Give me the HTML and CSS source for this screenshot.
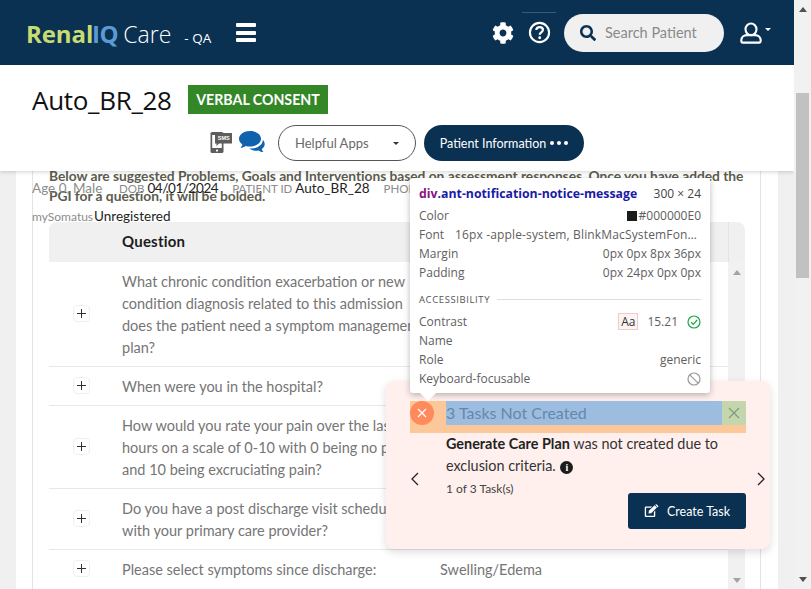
FILE: index.html
```html
<!DOCTYPE html>
<html lang="en">
<head>
<meta charset="utf-8">
<title>Auto_BR_28</title>
<link rel="stylesheet" href="styles.css">
</head>
<body>
<div class="viewport">
  <header class="topbar">
    <div class="brand"><span class="logo-renal">Renal</span><span class="logo-iq">IQ</span><span class="logo-care">Care</span><span class="logo-env">- QA</span></div>
    <div class="burger"><i></i><i></i><i></i></div>
    <div class="top-actions">
      <svg class="gear" viewBox="0 0 512 512"><path fill="#fff" d="M487.4 315.7l-42.6-24.6c4.3-23.2 4.3-47 0-70.2l42.6-24.6c4.9-2.8 7.1-8.6 5.5-14-11.1-35.6-30-67.8-54.7-94.6-3.8-4.1-10-5.1-14.8-2.3L380.8 110c-17.9-15.4-38.5-27.3-60.8-35.1V25.8c0-5.6-3.9-10.5-9.4-11.7-36.7-8.2-74.3-7.8-109.2 0-5.5 1.2-9.4 6.1-9.4 11.7V75c-22.2 7.9-42.8 19.8-60.8 35.1L88.7 85.5c-4.9-2.8-11-1.9-14.8 2.3-24.7 26.7-43.6 58.9-54.7 94.6-1.7 5.4.6 11.2 5.5 14L67.3 221c-4.3 23.2-4.3 47 0 70.2l-42.6 24.6c-4.9 2.8-7.1 8.6-5.5 14 11.1 35.6 30 67.8 54.7 94.6 3.8 4.1 10 5.1 14.8 2.3l42.6-24.6c17.9 15.4 38.5 27.3 60.8 35.1v49.2c0 5.6 3.9 10.5 9.4 11.7 36.7 8.2 74.3 7.8 109.2 0 5.5-1.2 9.4-6.1 9.4-11.7v-49.2c22.2-7.9 42.8-19.8 60.8-35.1l42.6 24.6c4.9 2.8 11 1.9 14.8-2.3 24.7-26.7 43.6-58.9 54.7-94.6 1.5-5.5-.7-11.3-5.6-14.1zM256 336c-44.1 0-80-35.9-80-80s35.9-80 80-80 80 35.9 80 80-35.9 80-80 80z"/></svg>
      <div class="help-wrap">
        <svg class="help" viewBox="0 0 24 24"><circle cx="12" cy="12" r="10" fill="none" stroke="#fff" stroke-width="2.2"/><path d="M8.600 9.400c.2-2 1.600-3.100 3.500-3.100 2 0 3.500 1.200 3.500 2.900 0 2.600-3.400 2.600-3.400 5.100" fill="none" stroke="#fff" stroke-width="2.300"/><circle cx="12.200" cy="17.500" r="1.500" fill="#fff"/></svg>
      </div>
      <div class="search">
        <svg class="search-icon" viewBox="0 0 512 512"><path fill="#0a3152" d="M505 442.7L405.3 343c-4.5-4.5-10.6-7-17-7H372c27.6-35.3 44-79.7 44-128C416 93.1 322.9 0 208 0S0 93.1 0 208s93.1 208 208 208c48.3 0 92.7-16.4 128-44v16.3c0 6.4 2.5 12.5 7 17l99.7 99.7c9.4 9.4 24.6 9.4 33.9 0l28.3-28.3c9.4-9.4 9.4-24.6.1-34zM208 336c-70.7 0-128-57.2-128-128 0-70.7 57.2-128 128-128 70.7 0 128 57.2 128 128 0 70.7-57.2 128-128 128z"/></svg>
        <span>Search Patient</span>
      </div>
      <div class="user">
        <svg class="user-icon" viewBox="0 0 24 24"><ellipse cx="12" cy="8" rx="6" ry="6.300" fill="none" stroke="#fff" stroke-width="2.300"/><path d="M3 22.500c-1.200 0-1.600-.8-1.600-2.200 0-3.600 2.800-6 6.200-6h8.800c3.400 0 6.200 2.400 6.200 6 0 1.400-.4 2.200-1.600 2.200z" fill="none" stroke="#fff" stroke-width="2.300" stroke-linejoin="round"/></svg>
        <span class="user-caret"></span>
      </div>
    </div>
  </header>

  <section class="subbar">
    <div class="subbar-title">
      <h1>Auto_BR_28</h1>
      <span class="badge">VERBAL CONSENT</span>
    </div>
    <div class="subbar-actions">
      <svg class="sms" viewBox="0 0 22 22"><rect x="0.5" y="1" width="13" height="21" rx="1.600" fill="#5d5d5d"/><rect x="2.200" y="4" width="9.600" height="13" fill="#fff"/><circle cx="7" cy="19.600" r="1.100" fill="#fff"/><path d="M5 2h17v10.500h-13l-2.500 2.500v-2.500h-1.500z" fill="#5d5d5d"/><text x="13.700" y="9.300" class="sms-text">SMS</text></svg>
      <svg class="chat" viewBox="0 0 28 22"><path d="M11 0C5 0 0 3.400 0 7.800c0 2.300 1.300 4.300 3.400 5.700-.3 1.300-1.100 2.500-2.100 3.300 2.100 0 4-.8 5.400-1.900 1.400.4 2.800.6 4.300.6 6 0 11-3.400 11-7.700S17 0 11 0z" fill="#0f62ad"/><path d="M23.800 8.800c.2 4.900-5 8.500-10.900 8.700-.9 0-1.800 0-2.700-.2 1.700 1.700 4.100 2.600 6.600 2.500 1 0 2-.2 2.900-.4 1.300 1 2.900 1.700 4.800 1.700-.9-.8-1.500-1.800-1.700-3 1.900-1.300 2.900-3 2.900-4.800 0-1.800-.8-3.300-1.900-4.500z" fill="#0f62ad"/></svg>
      <div class="pill pill-outline"><span>Helpful Apps</span><span class="caret"></span></div>
      <div class="pill pill-solid"><span>Patient Information</span><span class="dots"><i></i><i></i><i></i></span></div>
    </div>
  </section>

  <main class="gutter">
    <div class="card">
      <div class="panel">
        <p class="intro">Below are suggested Problems, Goals and Interventions based on assessment responses. Once you have added the<br>PGI for a question, it will be bolded.</p>
        <div class="patient-row row-one">
          <span class="lab age">Age 0, Male</span><span class="lab dob">DOB</span><span class="val date">04/01/2024</span><span class="lab pid">PATIENT ID</span><span class="val">Auto_BR_28</span><span class="lab phone">PHONE</span>
        </div>
        <div class="patient-row row-two"><span class="lab small">mySomatus</span><span class="val">Unregistered</span></div>

        <div class="table">
          <div class="thead">
            <div class="th-expand"></div>
            <div class="th-q">Question</div>
            <div class="th-bar"></div>
          </div>
          <div class="tbody">
            <div class="rows">
              <div class="tr"><div class="expand"><span class="plus"></span></div><div class="q">What chronic condition exacerbation or new<br>condition diagnosis related to this admission<br>does the patient need a symptom management<br>plan?</div></div>
              <div class="tr"><div class="expand"><span class="plus"></span></div><div class="q">When were you in the hospital?</div></div>
              <div class="tr"><div class="expand"><span class="plus"></span></div><div class="q">How would you rate your pain over the last 24<br>hours on a scale of 0-10 with 0 being no pain<br>and 10 being excruciating pain?</div></div>
              <div class="tr"><div class="expand"><span class="plus"></span></div><div class="q">Do you have a post discharge visit scheduled<br>with your primary care provider?</div></div>
              <div class="tr"><div class="expand"><span class="plus"></span></div><div class="q">Please select symptoms since discharge:</div><div class="a">Swelling/Edema</div></div>
            </div>
            <div class="inner-scroll"><span class="arrow-up"></span><span class="arrow-down"></span></div>
          </div>
        </div>
      </div>
    </div>
  </main>
</div>

<div class="page-scroll">
  <span class="arrow-up dark"></span>
  <div class="thumb"></div>
  <span class="arrow-down dark"></span>
</div>

<aside class="notice">
  <div class="notice-head">
    <div class="notice-msg">
      <span class="err"><svg viewBox="0 0 10 10"><path d="M1 1l8 8M9 1l-8 8" stroke="#fff" stroke-width="1.200"/></svg></span>
      <span class="notice-title">3 Tasks Not Created</span>
      <span class="notice-close"><svg viewBox="0 0 12 12"><path d="M1 1l10 10M11 1L1 11" stroke="#7d9a78" stroke-width="1.100"/></svg></span>
    </div>
  </div>
  <div class="notice-body">
    <svg class="chev" viewBox="0 0 10 14"><path d="M8 1L2 7l6 6" fill="none" stroke="#222" stroke-width="1.300"/></svg>
    <div class="notice-main">
      <p class="notice-text"><b>Generate Care Plan</b> was not created due to exclusion criteria. <span class="info">i</span></p>
      <div class="notice-count">1 of 3 Task(s)</div>
      <div class="notice-actions">
        <div class="task-btn">
          <svg viewBox="0 0 20 18"><path d="M1 4.500a1.500 1.500 0 0 1 1.500-1.500h8.500l-1.800 1.800H2.800v10.400h10.400v-5l1.800-1.800v7.100a1.500 1.500 0 0 1-1.500 1.500h-11A1.500 1.500 0 0 1 1 15.500z" fill="#fff"/><path d="M6.500 8.800l7.600-7.600 3.100 3.100-7.600 7.600-3.600.5zM15 .4l.7-.4c.4-.2.9-.1 1.200.2l1.900 1.900c.3.300.4.800.2 1.200l-.9 1z" fill="#fff"/></svg>
          <span>Create Task</span>
        </div>
      </div>
    </div>
    <svg class="chev" viewBox="0 0 10 14"><path d="M2 1l6 6-6 6" fill="none" stroke="#222" stroke-width="1.300"/></svg>
  </div>
</aside>

<aside class="inspector">
  <div class="ins-head"><span class="ins-sel"><span class="ins-tag">div</span>.ant-notification-notice-message</span><span>300 × 24</span></div>
  <div class="ins-row"><span>Color</span><span class="ins-color"><i class="swatch"></i>#000000E0</span></div>
  <div class="ins-row"><span>Font</span><span class="ins-font">16px -apple-system, BlinkMacSystemFon…</span></div>
  <div class="ins-row"><span>Margin</span><span>0px 0px 8px 36px</span></div>
  <div class="ins-row"><span>Padding</span><span>0px 24px 0px 0px</span></div>
  <div class="ins-section"><span>ACCESSIBILITY</span><i></i></div>
  <div class="ins-row"><span>Contrast</span><span class="ins-contrast"><span class="aa">Aa</span><span>15.21</span><svg viewBox="0 0 14 14"><circle cx="7" cy="7" r="6" fill="none" stroke="#1ea446" stroke-width="1.200"/><path d="M4 7.200l2.200 2.200L10.200 5" fill="none" stroke="#1ea446" stroke-width="1.200"/></svg></span></div>
  <div class="ins-row"><span>Name</span></div>
  <div class="ins-row"><span>Role</span><span>generic</span></div>
  <div class="ins-row"><span>Keyboard-focusable</span><svg class="ins-no" viewBox="0 0 14 14"><circle cx="7" cy="7" r="6" fill="none" stroke="#999" stroke-width="1.200"/><path d="M2.800 2.800l8.400 8.400" stroke="#999" stroke-width="1.200"/></svg></div>
</aside>
</body>
</html>
```

FILE: styles.css
```css
* { box-sizing: border-box; }
html, body { margin: 0; height: 589px; overflow: hidden; }
body { display: flex; position: relative; font-family: Lato, "Noto Sans", sans-serif; color: #222; background: #f0f0f0; }
p, h1 { margin: 0; }

.viewport { flex: 1; min-width: 0; height: 589px; overflow: hidden; display: flex; flex-direction: column; }

.topbar { height: 65px; flex: none; background: #0a3152; display: flex; align-items: center; padding: 0 26px; color: #fff; }
.brand { display: flex; align-items: baseline; font-family: "Open Sans", sans-serif; width: 210px; padding-top: 1px; }
.logo-renal { width: 66px; font-size: 24px; font-weight: 700; color: #c8dc72; letter-spacing: -.1px; }
.logo-iq { font-size: 24px; font-weight: 700; color: #5b9bd5; letter-spacing: -.4px; }
.logo-care { font-size: 23px; font-weight: 300; color: #fff; margin-left: 5px; }
.logo-env { font-size: 13.500px; font-weight: 400; margin-left: 13px; color: #fff; }
.burger { width: 20px; display: flex; flex-direction: column; gap: 3.500px; }
.burger i { height: 4px; background: #fff; border-radius: 1px; }
.top-actions { margin-left: auto; display: flex; align-items: center; margin-right: -3px; height: 65px; }
.gear { width: 22px; height: 22px; margin-right: 14px; }
.help-wrap { width: 34px; align-self: flex-start; height: 40px; margin-top: 12px; margin-left: -6px; border-top: 1px solid #3d5a75; display: flex; justify-content: center; padding-top: 8px; }
.help { width: 23px; height: 23px; }
.search { width: 160px; height: 38px; margin-left: 8px; border-radius: 19px; background: #f0f0f0; display: flex; align-items: center; padding-left: 16px; gap: 9px; font-size: 14.500px; color: #8a8a8a; }
.search-icon { width: 16px; height: 16px; }
.user { margin-left: 16px; display: flex; align-items: flex-start; }
.user-icon { width: 22px; height: 22px; }
.user-caret { margin: 6px 0 0 3px; border: 3px solid transparent; border-top-color: #fff; border-bottom: 0; }

.subbar { height: 106px; flex: none; background: #fff; box-shadow: 0 1px 4px rgba(0,0,0,.18); position: relative; z-index: 2; padding: 20px 32px 0; }
.subbar-title { display: flex; align-items: center; height: 29px; }
h1 { width: 156px; font-size: 26px; color: #111; font-family: "Open Sans", sans-serif; font-weight: 400; letter-spacing: -.3px; }
.badge { background: #338727; color: #fff; height: 29px; width: 140px; display: flex; align-items: center; justify-content: center; font-size: 14.200px; font-weight: 700; }
.subbar-actions { display: flex; justify-content: center; align-items: center; gap: 7px; margin-top: 11px; height: 36px; margin-left: -32px; margin-right: -32px; }
.sms { width: 22px; height: 22px; margin-top: -2px; }
.sms-text { font: 700 5.500px "Liberation Sans", sans-serif; fill: #fff; text-anchor: middle; }
.chat { width: 28px; height: 22px; margin-top: -3px; margin-right: 4px; }
.pill { height: 36px; border-radius: 18px; display: flex; align-items: center; font-size: 13px; }
.pill-outline { width: 138px; border: 1px solid #555; padding: 0 16px; justify-content: space-between; color: #6a6a6a; }
.caret { border: 3.500px solid transparent; border-top-color: #333; border-bottom: 0; }
.pill-solid { width: 160px; margin-left: 1px; background: #0a3152; color: #fff; justify-content: center; gap: 4px; font-size: 12.500px; }
.dots { display: flex; gap: 3px; }
.dots i { width: 4px; height: 4px; border-radius: 50%; background: #fff; }

.gutter { flex: 1; min-height: 0; padding: 0 16px; margin-top: -7px; }
.card { background: #fff; height: 100%; padding: 0 17px 0 16px; }
.panel { position: relative; height: 100%; border-left: 1px solid #e4e4e4; border-right: 1px solid #e4e4e4; padding: 0 15px 0 16px; }
.intro { font-size: 13.800px; line-height: 20px; font-weight: 700; color: #5c5c4e; padding-top: 2px; height: 58px; white-space: nowrap; letter-spacing: -.04px; }
.patient-row { position: absolute; left: -1px; display: flex; align-items: baseline; white-space: nowrap; color: #333; font-size: 14px; }
.row-one { top: 16px; }
.row-two { top: 44px; }
.lab { color: #8c8c8c; }
.lab.age { font-size: 13.500px; width: 87px; }
.lab.small { font-size: 12px; margin-right: 1px; }
.dob { font-size: 11.500px; margin-right: 3px; }
.pid { margin-left: 14px; font-size: 11.500px; margin-right: 3px; }
.phone { margin-left: 14px; font-size: 11.500px; }
.val { color: #222; font-size: 13.500px; }
.val.date { letter-spacing: -.4px; }

.table { font-size: 14.500px; color: #757575; }
.thead { height: 40px; display: flex; background: #f0f0f0; border-radius: 8px 8px 0 0; align-items: center; color: #1c1c1c; font-weight: 700; font-size: 15px; }
.th-expand { width: 73px; }
.th-q { flex: 1; letter-spacing: .2px; padding-bottom: 3px; }
.th-bar { width: 17px; height: 100%; border-left: 1px solid #e4e4e4; }
.tbody { display: flex; }
.rows { flex: 1; min-width: 0; }
.tr { display: flex; align-items: center; border-bottom: 1px solid #e8e8e8; padding: 9px 0 7px; line-height: 22px; }
.tr:last-child { border-bottom: 0; }
.expand { width: 73px; flex: none; display: flex; justify-content: center; padding-right: 8px; margin-top: -4px; }
.plus { width: 17px; height: 17px; border: 1px solid #f0f0f0; border-radius: 4px; position: relative; }
.plus::before { content: ""; position: absolute; left: 3px; right: 3px; top: 7px; height: 1px; background: #333; }
.plus::after { content: ""; position: absolute; top: 3px; bottom: 3px; left: 7px; width: 1px; background: #333; }
.q { width: 318px; flex: none; white-space: nowrap; }
.inner-scroll { width: 17px; flex: none; height: 327px; background: #f1f1f1; display: flex; flex-direction: column; justify-content: space-between; align-items: center; padding: 8px 0 6px; }
.arrow-up { border: 4px solid transparent; border-bottom: 5px solid #a3a3a3; border-top: 0; }
.arrow-down { border: 4px solid transparent; border-top: 5px solid #a3a3a3; border-bottom: 0; }
.arrow-up.dark { border-bottom-color: #505050; }
.arrow-down.dark { border-top-color: #505050; }

.page-scroll { width: 17px; flex: none; height: 589px; background: #f1f1f1; display: flex; flex-direction: column; align-items: center; padding: 7px 0; }
.thumb { width: 13px; height: 185px; margin-top: 81px; background: #c1c1c1; }
.page-scroll .arrow-down { margin-top: auto; }

.notice { position: absolute; left: 386px; top: 381px; width: 384px; height: 168px; background: #fff0ee; border-radius: 8px; box-shadow: 0 3px 8px rgba(0,0,0,.14); padding: 20px 24px; z-index: 4; }
.notice-head { height: 32px; background: #fcc899; }
.notice-msg { display: flex; align-items: center; height: 24px; position: relative; padding-left: 36px; }
.err { position: absolute; left: 0; top: 0; width: 24px; height: 24px; border-radius: 50%; background: #ff8a5c; display: flex; align-items: center; justify-content: center; }
.err svg { width: 10px; height: 10px; }
.notice-title { flex: 1; height: 24px; line-height: 24px; background: #9dbde0; color: #6587ab; font-size: 16px; }
.notice-close { width: 24px; height: 24px; background: #c3d6ad; display: flex; align-items: center; justify-content: center; }
.notice-close svg { width: 12px; height: 12px; }
.notice-body { display: flex; align-items: center; margin-right: -20px; }
.chev { width: 10px; height: 14px; flex: none; margin-top: -5px; }
.notice-main { flex: 1; padding-left: 26px; padding-right: 10px; }
.notice-text { font-size: 14.400px; line-height: 22px; color: #333; }
.notice-text b { color: #222; font-weight: 700; }
.info { display: inline-flex; width: 13px; height: 13px; border-radius: 50%; background: #1c1c1c; color: #fff; font: 700 10px "Liberation Serif", serif; align-items: center; justify-content: center; margin-left: 1px; }
.notice-count { font-size: 12px; color: #444; margin-top: 3px; line-height: 18px; }
.notice-actions { display: flex; justify-content: flex-end; margin-top: -5px; }
.task-btn { width: 118px; height: 36px; border-radius: 3px; background: #0a3152; color: #fff; display: flex; align-items: center; justify-content: center; gap: 8px; font-size: 12.500px; }
.task-btn svg { width: 15px; height: 14px; }

.inspector { position: absolute; left: 410px; top: 178px; width: 300px; height: 215px; background: #fff; border-radius: 3px; box-shadow: 0 2px 6px rgba(0,0,0,.28); padding: 6px 9px; font-family: "Open Sans", sans-serif; font-size: 12px; color: #5e5e5e; z-index: 5; }
.inspector::after { content: ""; position: absolute; left: 10px; top: 100%; border: 8px solid transparent; border-top-color: #fff; border-bottom: 0; }
.ins-head { display: flex; justify-content: space-between; line-height: 19px; margin-bottom: 3px; color: #444; }
.ins-sel { font-weight: 700; font-size: 12.300px; color: #1a1aa6; }
.ins-tag { color: #881280; }
.ins-row { display: flex; justify-content: space-between; align-items: center; height: 19px; }
.ins-font { margin-right: 4px; letter-spacing: .15px; }
.ins-color { display: flex; align-items: center; gap: 2px; }
.swatch { width: 10px; height: 10px; background: #1c1c1c; }
.ins-section { display: flex; align-items: center; gap: 7px; font-size: 9.500px; letter-spacing: .6px; height: 16px; margin: 9px 0 5px; color: #555; }
.ins-section i { flex: 1; height: 1px; background: #ddd; }
.ins-contrast { display: flex; align-items: center; gap: 9px; }
.ins-contrast svg { width: 14px; height: 14px; }
.aa { border: 1px solid #ecc; background: #fdf3f2; padding: 0 2px; line-height: 15px; color: #333; }
.ins-no { width: 14px; height: 14px; }
```
